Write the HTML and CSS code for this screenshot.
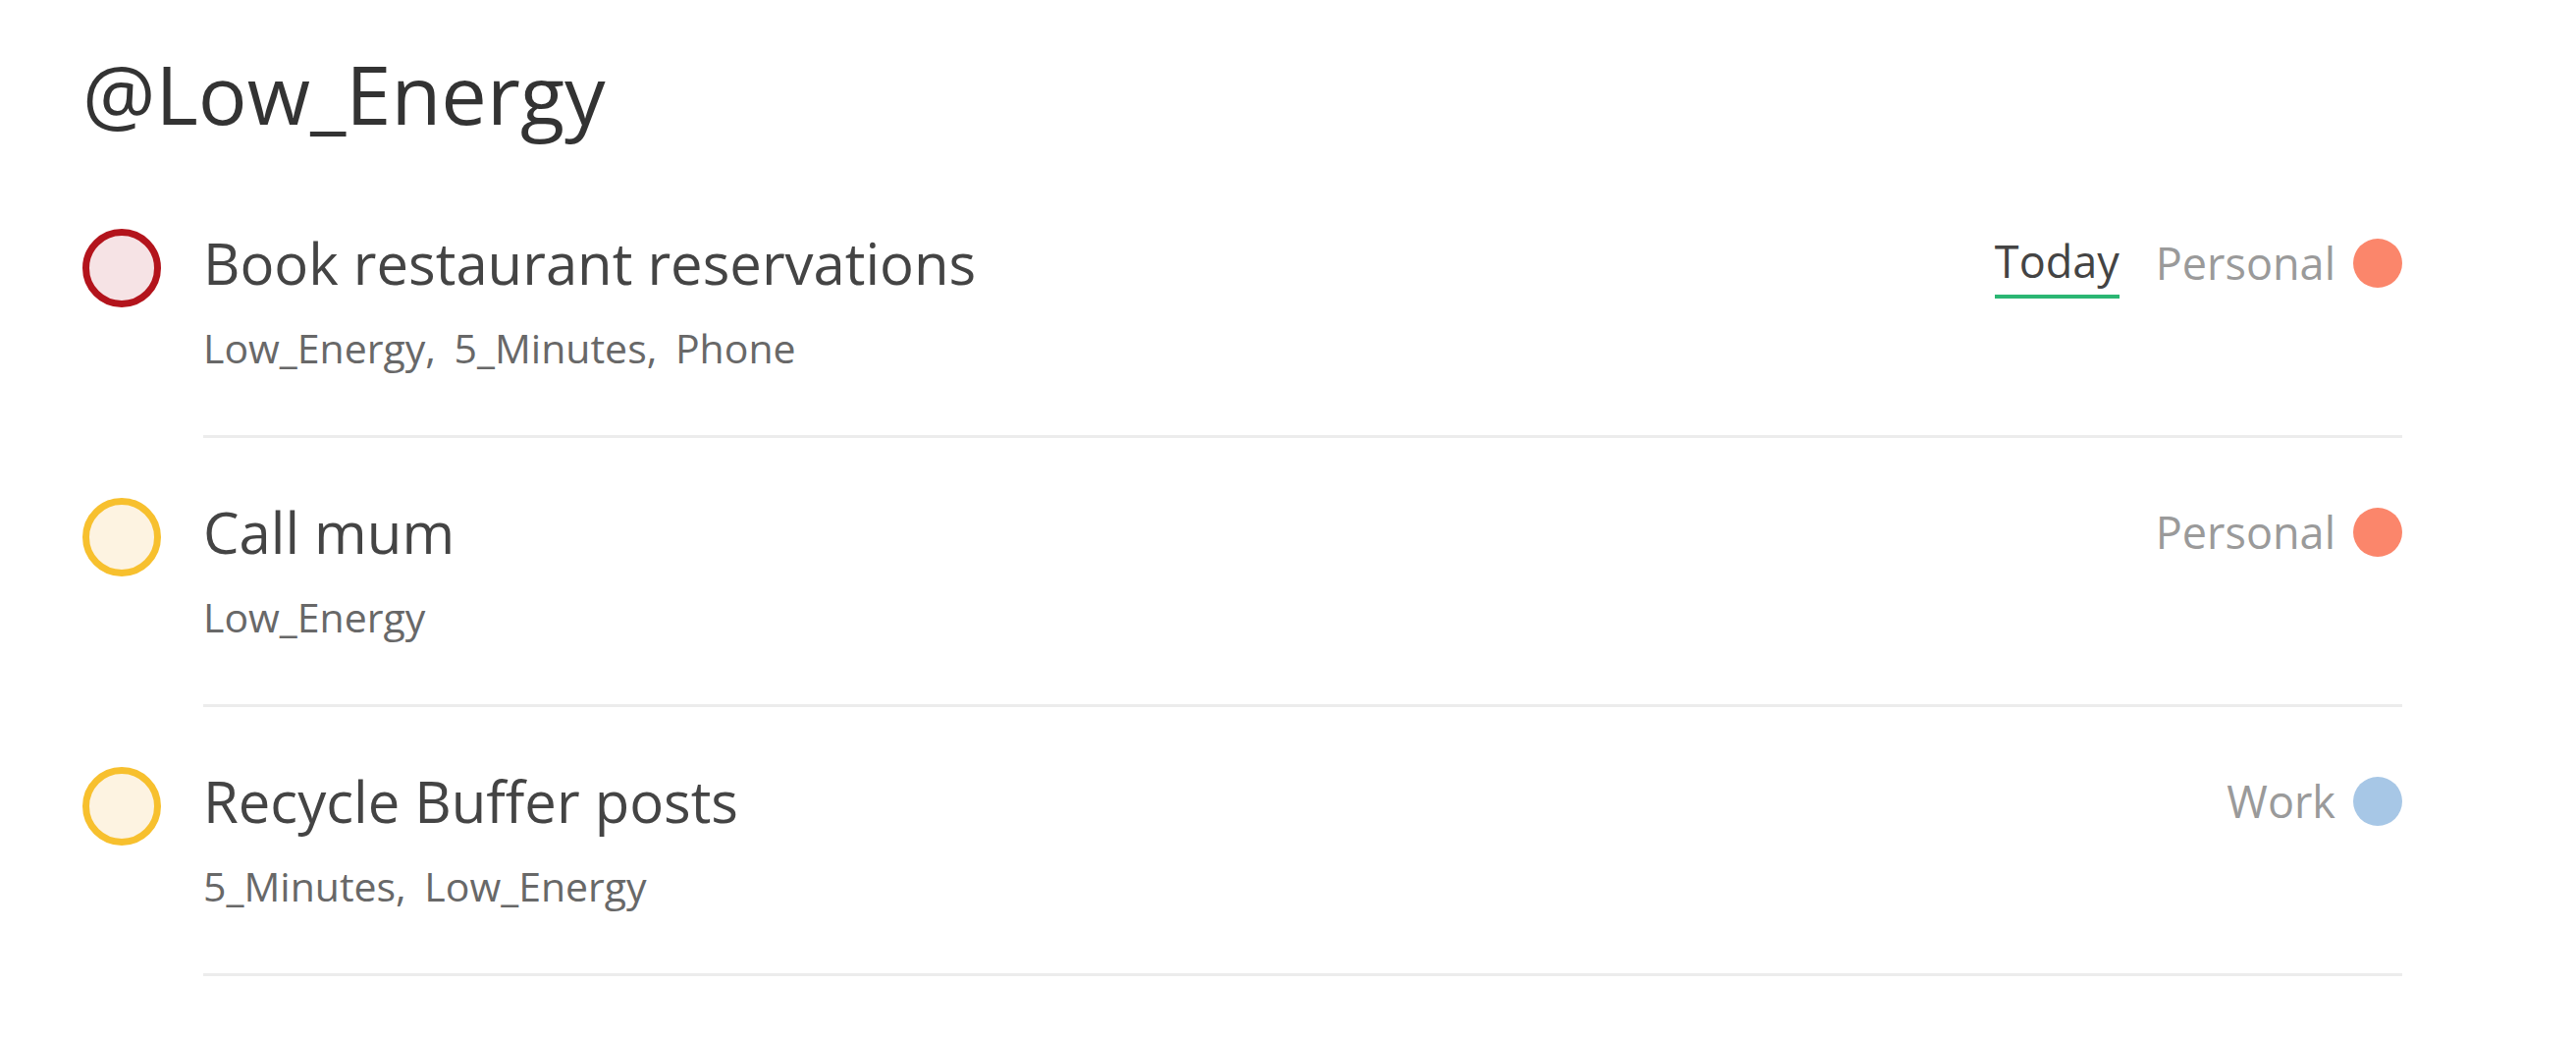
FILE: index.html
```html
<!doctype html>
<html lang="en">
<head>
    <meta charset="utf-8">
    <meta name="viewport" content="width=device-width, initial-scale=1">
    <link rel="stylesheet" href="styles.css">
    <title>@Low_Energy</title>
</head>
<body>
<section class="context">
    <h1 class="title">@Low_Energy</h1>
    <ul class="tasks">
        <li class="task">
            <span class="check check-high"></span>
            <div class="task-body">
                <div class="task-head">
                    <span class="task-name">Book restaurant reservations</span>
                    <div class="meta">
                        <span class="due">Today</span>
                        <span class="project">Personal</span>
                        <span class="dot dot-personal"></span>
                    </div>
                </div>
                <p class="tags">
                    <span class="tag">Low_Energy,</span>
                    <span class="tag">5_Minutes,</span>
                    <span class="tag">Phone</span>
                </p>
            </div>
        </li>
        <li class="task">
            <span class="check check-medium"></span>
            <div class="task-body">
                <div class="task-head">
                    <span class="task-name">Call mum</span>
                    <div class="meta">
                        <span class="project">Personal</span>
                        <span class="dot dot-personal"></span>
                    </div>
                </div>
                <p class="tags">
                    <span class="tag">Low_Energy</span>
                </p>
            </div>
        </li>
        <li class="task">
            <span class="check check-medium"></span>
            <div class="task-body">
                <div class="task-head">
                    <span class="task-name">Recycle Buffer posts</span>
                    <div class="meta">
                        <span class="project">Work</span>
                        <span class="dot dot-work"></span>
                    </div>
                </div>
                <p class="tags">
                    <span class="tag">5_Minutes,</span>
                    <span class="tag">Low_Energy</span>
                </p>
            </div>
        </li>
    </ul>
</section>
</body>
</html>
```

FILE: styles.css
```css
html, body {
    background-color: #fff;
    color: #333;
    font-family: "Open Sans", "DejaVu Sans", sans-serif;
    margin: 0;
}

* {
    box-sizing: border-box;
}

.context {
    width: 2363px;
    margin-left: 84px;
}

.title {
    margin: 45px 0 27px;
    font-size: 83px;
    font-weight: 400;
    line-height: 100px;
    color: #333;
}

.tasks {
    list-style: none;
    margin: 0;
    padding: 0;
}

.task {
    display: flex;
    padding-top: 58px;
}

.check {
    flex: none;
    width: 80px;
    height: 80px;
    margin: 3px 43px 0 0;
    border-radius: 50%;
    border: 7px solid;
}

.check-high {
    border-color: #b3141c;
    background-color: #f6e3e5;
}

.check-medium {
    border-color: #f7c02e;
    background-color: #fdf3e1;
}

.task-body {
    flex: 1;
    padding-bottom: 61px;
    border-bottom: 3px solid #ececec;
}

.task-head {
    display: flex;
    align-items: center;
    justify-content: space-between;
}

.task-name {
    font-size: 58px;
    line-height: 76px;
    color: #444;
}

.meta {
    display: flex;
    align-items: center;
    font-size: 45px;
    line-height: 60px;
}

.due {
    color: #444;
    border-bottom: 4px solid #2bb673;
    line-height: 58px;
    padding-bottom: 5px;
    margin: 0 37px -5px 0;
}

.project {
    color: #9a9a9a;
    margin-right: 18px;
}

.dot {
    width: 50px;
    height: 50px;
    border-radius: 50%;
}

.dot-personal {
    background-color: #fb866b;
}

.dot-work {
    background-color: #a7c7e6;
}

.tags {
    margin: 20px 0 0;
    font-size: 41px;
    line-height: 56px;
    color: #686868;
}

.tag {
    margin-right: 8px;
}
```
